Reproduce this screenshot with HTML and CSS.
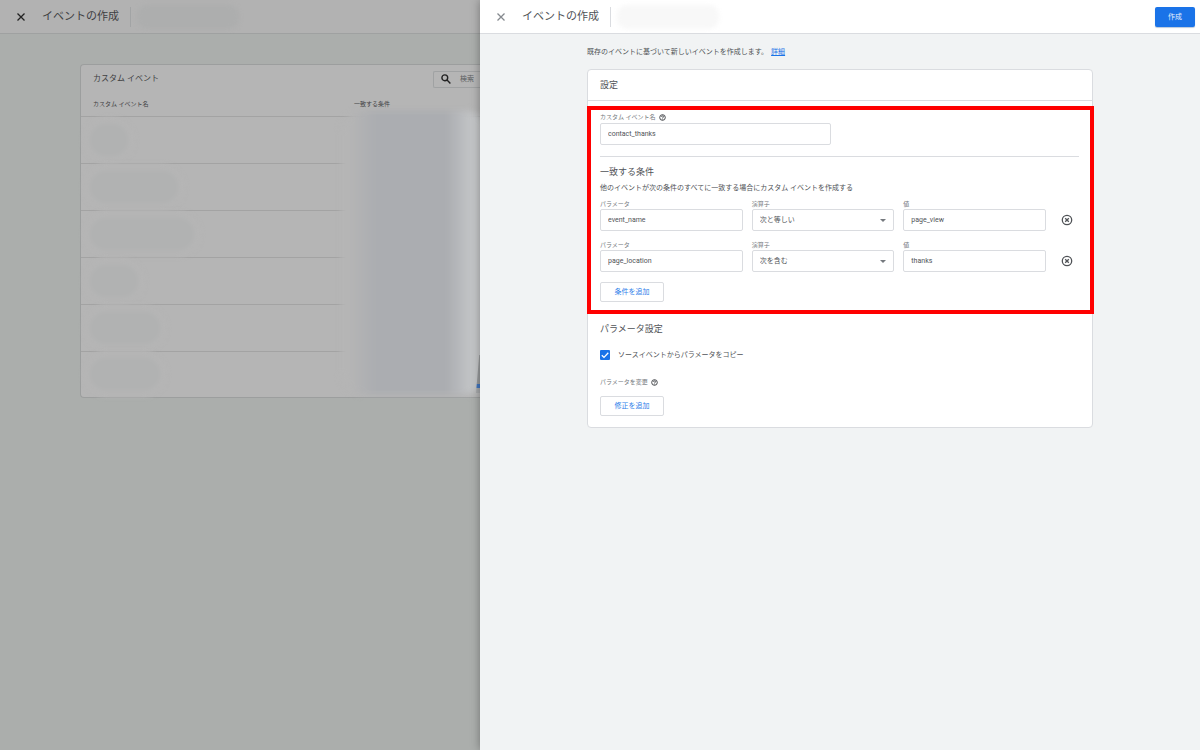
FILE: index.html
```html
<!DOCTYPE html>
<html lang="ja">
<head>
<meta charset="utf-8">
<meta name="viewport" content="width=device-width, initial-scale=1">
<title>イベントの作成</title>
<link rel="stylesheet" href="styles.css">
</head>
<body>
<div class="backdrop">
  <header class="bar bar-dim">
    <button class="close" type="button" aria-label="閉じる"><svg viewBox="0 0 10 10"><path d="M1.5 1.5l7 7M8.5 1.5l-7 7"/></svg></button>
    <h1 class="title">イベントの作成</h1>
    <span class="redacted"></span>
  </header>
  <main class="list">
    <section class="list-card">
      <div class="list-head">
        <h2 class="list-title">カスタム イベント</h2>
        <button class="search" type="button"><svg viewBox="0 0 10 10"><circle cx="3.8" cy="3.8" r="2.9"/><path d="M5.8 5.8l3.600 3.600"/></svg>検索</button>
      </div>
      <table class="events">
        <thead><tr><th class="col-name">カスタム イベント名</th><th>一致する条件</th></tr></thead>
        <tbody>
          <tr><td><span class="smudge w-xs"></span></td><td></td></tr>
          <tr><td><span class="smudge w-lg"></span></td><td></td></tr>
          <tr><td><span class="smudge w-xl"></span></td><td></td></tr>
          <tr><td><span class="smudge w-sm"></span></td><td></td></tr>
          <tr><td><span class="smudge w-md"></span></td><td></td></tr>
          <tr><td><span class="smudge w-md"></span></td><td></td></tr>
        </tbody>
      </table>
      <div class="veil"></div>
      <div class="sliver"></div>
    </section>
  </main>
</div>

<div class="panel">
  <header class="bar">
    <button class="close" type="button" aria-label="閉じる"><svg viewBox="0 0 10 10"><path d="M1.5 1.5l7 7M8.5 1.5l-7 7"/></svg></button>
    <h1 class="title">イベントの作成</h1>
    <span class="redacted"></span>
    <button class="create" type="submit" form="event-form">作成</button>
  </header>
  <main class="content">
    <p class="intro">既存のイベントに基づいて新しいイベントを作成します。<a href="#">詳細</a></p>
    <form class="card" id="event-form">
      <h2 class="card-title">設定</h2>
      <div class="marked">
        <section class="block name-block">
          <div class="field name-field">
            <label for="name">カスタム イベント名 <svg class="help" viewBox="0 0 12 12"><circle cx="6" cy="6" r="4.8"/><path d="M4.3 4.9c0-2.2 3.4-2.2 3.4-.1C7.700 6 6 6 6 7.300M6 8.100v1.200"/></svg></label>
            <input id="name" type="text" value="contact_thanks">
          </div>
        </section>
        <section class="block">
          <h3>一致する条件</h3>
          <p class="hint">他のイベントが次の条件のすべてに一致する場合にカスタム イベントを作成する</p>
          <div class="condition">
            <div class="field"><label for="p1">パラメータ</label><input id="p1" type="text" value="event_name"></div>
            <div class="field"><label for="o1">演算子</label><select id="o1"><option>次と等しい</option></select></div>
            <div class="field"><label for="v1">値</label><input id="v1" type="text" value="page_view"></div>
            <button class="remove" type="button" aria-label="条件を削除"><svg viewBox="0 0 12 12"><circle cx="6" cy="6" r="4.700"/><path d="M4.200 4.200l3.600 3.600M7.800 4.200l-3.600 3.600"/></svg></button>
          </div>
          <div class="condition">
            <div class="field"><label for="p2">パラメータ</label><input id="p2" type="text" value="page_location"></div>
            <div class="field"><label for="o2">演算子</label><select id="o2"><option>次を含む</option></select></div>
            <div class="field"><label for="v2">値</label><input id="v2" type="text" value="thanks"></div>
            <button class="remove" type="button" aria-label="条件を削除"><svg viewBox="0 0 12 12"><circle cx="6" cy="6" r="4.700"/><path d="M4.200 4.200l3.600 3.600M7.800 4.200l-3.600 3.600"/></svg></button>
          </div>
          <button class="add" type="button">条件を追加</button>
        </section>
      </div>
      <section class="block params">
        <h3>パラメータ設定</h3>
        <label class="check"><input type="checkbox" checked>ソースイベントからパラメータをコピー</label>
        <p class="sub">パラメータを変更 <svg class="help" viewBox="0 0 12 12"><circle cx="6" cy="6" r="4.8"/><path d="M4.3 4.9c0-2.2 3.4-2.2 3.4-.1C7.700 6 6 6 6 7.300M6 8.100v1.200"/></svg></p>
        <button class="add" type="button">修正を追加</button>
      </section>
    </form>
  </main>
</div>
</body>
</html>
```

FILE: styles.css
```css
* { box-sizing: border-box; }

body {
  margin: 0;
  min-height: 100vh;
  overflow: hidden;
  display: grid;
  grid-template-columns: 2fr 3fr;
  font-family: Roboto, "Noto Sans CJK JP", sans-serif;
  font-size: 7px;
  line-height: 12px;
  color: #505357;
}

h1, h2, h3, p { margin: 0; font-weight: 400; }
button, input, select { font: inherit; color: inherit; margin: 0; }
button { padding: 0; border: 0; background: none; }
svg { fill: none; stroke: currentColor; flex: none; }

/* Top bars */
.bar {
  display: flex;
  align-items: center;
  height: 34px;
  padding: 0 5px 0 16px;
  background: #fff;
  border-bottom: 1px solid #dadce0;
}
.close { width: 10px; height: 10px; display: flex; color: #85898e; }
.close svg { width: 10px; height: 10px; stroke-width: 1.300; }
.title {
  margin-left: 16px;
  padding-right: 11px;
  border-right: 1px solid #dadce0;
  font-size: 11px;
  line-height: 20px;
  white-space: nowrap;
}
.redacted {
  width: 102px;
  height: 24px;
  margin-left: 6px;
  border-radius: 10px;
  background: #f8f8f8;
  filter: blur(2px);
}
.create {
  width: 40px;
  height: 20px;
  margin-left: auto;
  border-radius: 2px;
  background: #1a73e8;
  color: #e4effd;
  box-shadow: 0 1px 1px #b9c8dc;
}

/* Dimmed page */
.backdrop { min-width: 0; overflow: hidden; background: #abaeac; color: #3e4042; }
.bar-dim { background: #b2b2b2; border-color: #9fa1a1; }
.bar-dim .close { color: #222; }
.bar-dim .title { border-color: #a2a4a5; }
.bar-dim .redacted { background: #adaeae; }

.list { padding: 30px 0 0 80px; }
.list-card {
  position: relative;
  border: 1px solid #9c9e9e;
  border-right: 0;
  border-radius: 4px 0 0 4px;
  background: #b5b5b5;
}
.list-head {
  display: flex;
  justify-content: space-between;
  align-items: center;
  height: 28px;
  padding-left: 12px;
}
.list-title { font-size: 8px; }
.search {
  display: flex;
  align-items: center;
  gap: 9px;
  width: 47px;
  height: 17px;
  padding-left: 7px;
  border: 1px solid #a0a2a3;
  border-right: 0;
  border-radius: 2px 0 0 2px;
  color: #5a5d60;
}
.search svg { width: 10px; height: 10px; color: #222; stroke-width: 1.400; }

.events { width: 100%; table-layout: fixed; border-collapse: collapse; }
.events th {
  height: 23px;
  padding: 0;
  font-size: 6px;
  font-weight: 400;
  line-height: 8px;
  text-align: left;
  border-bottom: 1px solid #a3a3a3;
}
.events .col-name { width: 273px; padding-left: 12px; }
.events td { height: 47px; padding: 0 0 0 9px; border-bottom: 1px solid #a3a3a3; }
.events tr:last-child td { height: 46px; border-bottom: 0; }
.smudge {
  display: block;
  height: 32px;
  border-radius: 16px;
  background: #b1b2b2;
  box-shadow: 0 0 0 7px #b5b5b5;
  filter: blur(2px);
}
.w-xs { width: 38px; }
.w-sm { width: 48px; }
.w-md { width: 70px; }
.w-lg { width: 88px; }
.w-xl { width: 104px; }

.veil {
  position: absolute;
  inset: 46px -8px 3px 260px;
  border-radius: 22px;
  background: linear-gradient(90deg, #b5b5b5 6%, #abadb1 24%, #abadb1 72%, #bfc1c3 86%, #cdcfd0);
  filter: blur(3px);
}
.sliver {
  position: absolute;
  right: 0;
  bottom: 4px;
  width: 4px;
  height: 38px;
  background: linear-gradient(#9a9c9e 76%, #4377c0 76%, #4377c0 88%, #a8aaac 88%);
  clip-path: polygon(80% 0, 100% 0, 100% 100%, 0 100%);
}

/* Side panel */
.panel {
  position: relative;
  min-width: 0;
  background: #f1f3f4;
  box-shadow: 0 0 9px rgba(0, 0, 0, .35);
}
.content { padding: 12px 107px; }
.intro { margin-bottom: 11px; }
.intro a { margin-left: 3px; color: #1a73e8; }
.card {
  border: 1px solid #dadce0;
  border-radius: 4px;
  background: #fff;
}
.card-title {
  padding: 9px 12px;
  border-bottom: 1px solid #dadce0;
  font-size: 9px;
}
.marked { position: relative; }
.marked::after {
  content: "";
  position: absolute;
  inset: 5px -2px 0 -1px;
  border: 4px solid #f00;
  pointer-events: none;
}
.block { margin: 0 13px 0 12px; padding: 9px 0 11px; border-bottom: 1px solid #dadce0; }
.name-block { padding-top: 12px; }
.block h3 { font-size: 9px; }
.hint { margin: 4px 0 6px; }

.field { display: flex; flex-direction: column; gap: 2px; min-width: 0; }
.name-field { width: 231px; }
.field label, .sub {
  display: flex;
  align-items: center;
  gap: 3px;
  font-size: 6px;
  line-height: 8px;
  color: #73777c;
}
.help { width: 7px; height: 7px; color: #44474b; stroke-width: 1.700; }
.field input, .field select {
  width: 100%;
  height: 22px;
  padding: 0 7px;
  border: 1px solid #dadce0;
  border-radius: 2px;
  background-color: #fff;
}
.condition .field { gap: 1px; }
.field select {
  appearance: none;
  background-image: url("data:image/svg+xml,%3Csvg xmlns='http://www.w3.org/2000/svg' viewBox='0 0 6 3'%3E%3Cpath d='M0 0h6L3 3z' fill='%2375797e'/%3E%3C/svg%3E");
  background-size: 6px 3px;
  background-position: right 7px center;
  background-repeat: no-repeat;
}
.condition {
  display: grid;
  grid-template-columns: repeat(3, minmax(0, 1fr)) 24px;
  gap: 9px;
  align-items: end;
  margin-bottom: 10px;
}
.remove { height: 22px; display: grid; place-items: center; }
.remove svg { width: 12px; height: 12px; stroke-width: 1.300; }
.add {
  display: block;
  width: 64px;
  height: 20px;
  border: 1px solid #dadce0;
  border-radius: 2px;
  color: #2f80ea;
}
.params { border-bottom: 0; }
.check { display: flex; align-items: center; gap: 8px; margin: 14px 0 17px; }
.check input {
  appearance: none;
  width: 10px;
  height: 10px;
  border-radius: 1px;
  background: #1a73e8 url("data:image/svg+xml,%3Csvg xmlns='http://www.w3.org/2000/svg' viewBox='0 0 10 10'%3E%3Cpath d='M1.800 5.200l2.200 2.200 4.300-4.600' fill='none' stroke='%23fff' stroke-width='1.300'/%3E%3C/svg%3E") center / 10px 10px;
}
.sub { margin-bottom: 10px; }
```
